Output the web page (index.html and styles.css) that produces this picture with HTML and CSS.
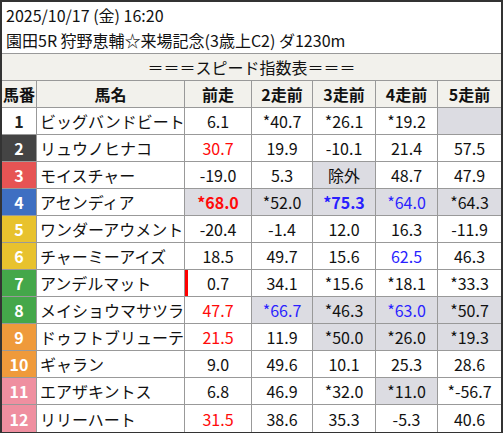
FILE: index.html
```html
<!DOCTYPE html>
<html lang="ja">
<head>
<meta charset="utf-8">
<link rel="stylesheet" href="styles.css">
</head>
<body>
<div class="frame">
  <div class="info">
    <div class="line">2025/10/17 (金) 16:20</div>
    <div class="line">園田5R 狩野恵輔☆来場記念(3歳上C2) ダ1230m</div>
  </div>
  <div class="grid">
    <div class="cell title">＝＝＝スピード指数表＝＝＝</div>
    <div class="cell hd">馬番</div><div class="cell hd">馬名</div><div class="cell hd">前走</div><div class="cell hd">2走前</div><div class="cell hd">3走前</div><div class="cell hd">4走前</div><div class="cell hd last">5走前</div>

    <div class="cell num w1">1</div><div class="cell name">ビッグバンドビート</div><div class="cell">6.1</div><div class="cell">*40.7</div><div class="cell">*26.1</div><div class="cell">*19.2</div><div class="cell last hl"></div>
    <div class="cell num w2">2</div><div class="cell name">リュウノヒナコ</div><div class="cell red">30.7</div><div class="cell">19.9</div><div class="cell">-10.1</div><div class="cell">21.4</div><div class="cell last">57.5</div>
    <div class="cell num w3">3</div><div class="cell name">モイスチャー</div><div class="cell">-19.0</div><div class="cell">5.3</div><div class="cell hl">除外</div><div class="cell">48.7</div><div class="cell last">47.9</div>
    <div class="cell num w4">4</div><div class="cell name">アセンディア</div><div class="cell hl red b">*68.0</div><div class="cell hl">*52.0</div><div class="cell hl blue b">*75.3</div><div class="cell hl blue">*64.0</div><div class="cell hl last">*64.3</div>
    <div class="cell num w5">5</div><div class="cell name">ワンダーアウメント</div><div class="cell">-20.4</div><div class="cell">-1.4</div><div class="cell">12.0</div><div class="cell">16.3</div><div class="cell last">-11.9</div>
    <div class="cell num w5">6</div><div class="cell name">チャーミーアイズ</div><div class="cell">18.5</div><div class="cell">49.7</div><div class="cell">15.6</div><div class="cell blue">62.5</div><div class="cell last">46.3</div>
    <div class="cell num w7">7</div><div class="cell name">アンデルマット</div><div class="cell mark">0.7</div><div class="cell">34.1</div><div class="cell">*15.6</div><div class="cell">*18.1</div><div class="cell last">*33.3</div>
    <div class="cell num w7">8</div><div class="cell name">メイショウマサツラ</div><div class="cell red">47.7</div><div class="cell hl blue">*66.7</div><div class="cell hl">*46.3</div><div class="cell hl blue">*63.0</div><div class="cell hl last">*50.7</div>
    <div class="cell num w9">9</div><div class="cell name">ドゥフトブリューテ</div><div class="cell red">21.5</div><div class="cell">11.9</div><div class="cell hl">*50.0</div><div class="cell hl">*26.0</div><div class="cell hl last">*19.3</div>
    <div class="cell num w9">10</div><div class="cell name">ギャラン</div><div class="cell">9.0</div><div class="cell">49.6</div><div class="cell">10.1</div><div class="cell">25.3</div><div class="cell last">28.6</div>
    <div class="cell num w11">11</div><div class="cell name">エアザキントス</div><div class="cell">6.8</div><div class="cell">46.9</div><div class="cell">*32.0</div><div class="cell hl">*11.0</div><div class="cell last">*-56.7</div>
    <div class="cell num w11 bot">12</div><div class="cell name bot">リリーハート</div><div class="cell red bot">31.5</div><div class="cell bot">38.6</div><div class="cell bot">35.3</div><div class="cell bot">-5.3</div><div class="cell last bot">40.6</div>
  </div>
</div>
</body>
</html>
```
FILE: styles.css
```css
* { box-sizing: border-box; }
html, body { margin: 0; padding: 0; background: #fff; }
body {
  font-family: "Noto Sans CJK JP", "Noto Sans", sans-serif;
  font-size: 16px;
  color: #111;
}
.frame {
  width: 503px;
  height: 433px;
  border: 2px solid #333;
  display: flex;
  flex-direction: column;
}
.info {
  height: 52px;
  padding: 1px 0 0 4px;
  border-bottom: 1px solid #999;
  display: flex;
  flex-direction: column;
}
.line {
  height: 25px;
  line-height: 25px;
  white-space: nowrap;
}
.grid {
  display: grid;
  grid-template-columns: 35px 148px 67px 61px 63px 62px 63px;
  grid-auto-rows: 27px;
  background: #fff;
}
.cell {
  border-right: 1px solid #999;
  border-bottom: 1px solid #999;
  display: flex;
  align-items: center;
  justify-content: center;
  white-space: nowrap;
  line-height: 1;
}
.cell.last { border-right: none; }
.cell.bot { border-bottom: none; }
.title {
  grid-column: 1 / -1;
  border-right: none;
  background: #f2f1ec;
}
.hd {
  background: #f2f1ec;
  font-weight: bold;
}
.name {
  justify-content: flex-start;
  padding-left: 3px;
}
.num {
  font-weight: bold;
  color: #fff;
}
.w1 { background: #fff; color: #222; }
.w2 { background: #444; }
.w3 { background: #e65454; }
.w4 { background: #3e6fc2; }
.w5 { background: #e8c22e; }
.w7 { background: #44a74a; }
.w9 { background: #ef9a3b; }
.w11 { background: #ef8fa0; }
.hl { background: #dcdce2; }
.red { color: #ff0a0a; }
.blue { color: #2a1fff; }
.b { font-weight: bold; }
.mark { box-shadow: inset 3px 0 0 #ff0000; }
```
